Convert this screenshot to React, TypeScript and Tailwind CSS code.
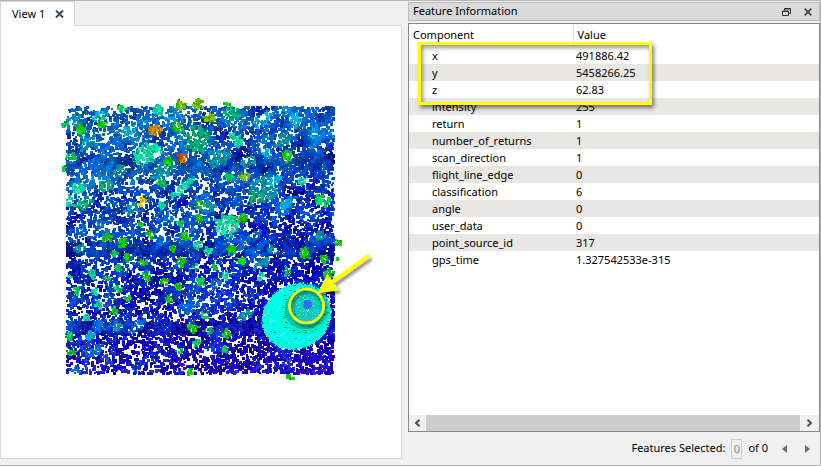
import { useMemo } from 'react';

type RGB = [number, number, number];

interface IFeatureRow {
  component: string;
  value: string;
}

const rows: IFeatureRow[] = [
  { component: 'x', value: '491886.42' },
  { component: 'y', value: '5458266.25' },
  { component: 'z', value: '62.83' },
  { component: 'intensity', value: '255' },
  { component: 'return', value: '1' },
  { component: 'number_of_returns', value: '1' },
  { component: 'scan_direction', value: '1' },
  { component: 'flight_line_edge', value: '0' },
  { component: 'classification', value: '6' },
  { component: 'angle', value: '0' },
  { component: 'user_data', value: '0' },
  { component: 'point_source_id', value: '317' },
  { component: 'gps_time', value: '1.327542533e-315' },
];

// Height classes of the objects that stand above the ground
const colors: Record<string, RGB> = {
  green: [15, 210, 10],
  lime: [110, 195, 0],
  sea: [0, 170, 120],
  aqua: [0, 225, 165],
  mint: [0, 205, 90],
  cyan: [0, 175, 225],
  teal: [0, 145, 175],
  sky: [0, 105, 225],
  navy: [0, 15, 190],
  gold: [210, 145, 0],
  yellow: [240, 205, 0],
  red: [205, 70, 0],
};

// [color, x, y, rx, ry, rotation in degrees]
type Shape = [string, number, number, number, number?, number?];

const roofs: Shape[] = [
  ['teal', 88, 142, 11, 6, -35], ['cyan', 100, 115, 9, 6, -35], ['cyan', 128, 130, 12, 5, -35],
  ['sky', 110, 148, 14, 8, -35], ['sky', 90, 168, 16, 8, -25], ['aqua', 147, 154, 16, 10, -35],
  ['sea', 197, 139, 13, 15, 0], ['teal', 120, 170, 10, 6, -35], ['teal', 163, 170, 14, 9, -40],
  ['aqua', 182, 187, 15, 5, -42], ['sea', 105, 186, 9, 6, -20], ['aqua', 77, 187, 8, 6],
  ['aqua', 69, 201, 6], ['sea', 85, 203, 10, 6, -40], ['teal', 132, 208, 10, 6, -35],
  ['navy', 183, 202, 7, 5, -30], ['sea', 232, 113, 8, 7], ['cyan', 263, 119, 13, 6, -40],
  ['cyan', 295, 120, 7], ['cyan', 312, 135, 4], ['teal', 283, 140, 11, 6, -40],
  ['aqua', 235, 139, 9, 5, 40], ['teal', 217, 158, 14, 10, -10], ['teal', 247, 162, 10, 6, -25],
  ['cyan', 267, 153, 5], ['teal', 262, 190, 19, 12, -42], ['sea', 255, 198, 8, 6, -40],
  ['cyan', 274, 180, 7, 5, -40], ['aqua', 302, 180, 5], ['mint', 322, 200, 8, 7],
  ['sky', 285, 205, 14, 8, -45], ['cyan', 286, 204, 8, 5, -45], ['aqua', 226, 225, 12, 12],
  ['sky', 255, 235, 9, 5, -35], ['teal', 320, 235, 5], ['teal', 210, 207, 6],
  ['teal', 80, 248, 8, 5, -25], ['sky', 240, 247, 14, 5, -40], ['teal', 262, 263, 11, 4, -35],
  ['teal', 273, 250, 7, 4, 30], ['teal', 245, 315, 10, 6, -35], ['sky', 188, 305, 13, 8, -35],
  ['sky', 95, 350, 10, 5, -35], ['sky', 215, 283, 6, 4], ['cyan', 90, 335, 5],
  ['sky', 98, 327, 6], ['sky', 136, 327, 12, 5, -35], ['teal', 117, 326, 5],
  ['teal', 130, 375, 3, 1], ['sky', 75, 370, 5],
];

const trees: Shape[] = [
  ['mint', 65, 124, 3], ['green', 80, 129, 6], ['green', 102, 123, 5], ['mint', 122, 107, 5, 4],
  ['gold', 155, 130, 7], ['aqua', 158, 110, 6, 5], ['green', 177, 127, 6], ['lime', 180, 105, 5],
  ['lime', 198, 104, 6, 5], ['red', 164, 98, 1], ['mint', 71, 157, 6], ['mint', 64, 168, 3],
  ['red', 182, 158, 6], ['gold', 182, 161, 3], ['green', 168, 160, 5], ['mint', 162, 183, 5],
  ['yellow', 142, 201, 5], ['aqua', 161, 205, 4], ['green', 200, 204, 5], ['green', 199, 218, 4],
  ['green', 141, 224, 4], ['green', 150, 234, 5], ['mint', 181, 223, 4], ['green', 184, 237, 5],
  ['green', 107, 237, 5], ['lime', 209, 117, 6], ['green', 226, 104, 3, 2], ['green', 287, 156, 7],
  ['lime', 245, 177, 6, 5], ['mint', 228, 177, 5], ['green', 242, 218, 6], ['green', 123, 243, 5],
  ['aqua', 197, 245, 5], ['green', 172, 248, 4], ['mint', 113, 253, 4], ['green', 127, 257, 4],
  ['mint', 118, 267, 4], ['green', 143, 262, 4], ['green', 147, 276, 5], ['green', 181, 262, 5],
  ['mint', 196, 266, 4], ['mint', 200, 282, 5], ['green', 164, 281, 4], ['green', 178, 286, 4],
  ['green', 168, 298, 4], ['aqua', 92, 274, 5], ['mint', 107, 278, 4], ['mint', 118, 288, 4],
  ['aqua', 95, 290, 4], ['mint', 77, 290, 4], ['aqua', 70, 277, 3], ['mint', 127, 297, 4],
  ['green', 114, 310, 4], ['aqua', 99, 305, 4], ['aqua', 87, 318, 4], ['mint', 69, 336, 5, 4],
  ['green', 72, 352, 5], ['green', 192, 328, 6], ['mint', 196, 343, 4], ['mint', 180, 350, 4],
  ['green', 190, 371, 5, 4], ['aqua', 208, 251, 5], ['green', 231, 249, 5], ['green', 241, 260, 5],
  ['green', 305, 253, 6], ['green', 323, 258, 5], ['green', 337, 243, 4], ['green', 337, 258, 2],
  ['green', 328, 273, 5], ['sea', 287, 271, 5], ['mint', 215, 266, 4], ['aqua', 225, 275, 4],
  ['aqua', 260, 277, 4], ['mint', 204, 315, 4], ['sea', 208, 330, 5], ['green', 227, 333, 5],
  ['mint', 225, 350, 4], ['green', 290, 376, 4, 3],
];

// Places where no ground point was returned
const gaps: [number, number, number][] = [
  [99, 248, 4], [128, 352, 4], [177, 315, 3], [155, 297, 4], [197, 338, 3], [192, 362, 4],
  [232, 211, 5], [263, 118, 4], [75, 308, 3], [75, 363, 3], [197, 278, 3], [67, 178, 4],
  [143, 306, 3], [190, 282, 3], [180, 216, 3], [132, 208, 3],
];

const CLOUD = { left: 55, top: 90, width: 320, height: 300 };
const GROUND = { left: 66, top: 106, right: 334, bottom: 374 };

function createRandom(seed: number) {
  let a = seed;
  return () => {
    a = (a + 0x6d2b79f5) | 0;
    let t = Math.imul(a ^ (a >>> 15), 1 | a);
    t = (t + Math.imul(t ^ (t >>> 7), 61 | t)) ^ t;
    return ((t ^ (t >>> 14)) >>> 0) / 4294967296;
  };
}

function hash(x: number, y: number) {
  const n = Math.sin(x * 127.1 + y * 311.7) * 43758.5453;
  return n - Math.floor(n);
}

function noise(x: number, y: number) {
  const ix = Math.floor(x);
  const iy = Math.floor(y);
  const fx = x - ix;
  const fy = y - iy;
  const top = hash(ix, iy) * (1 - fx) + hash(ix + 1, iy) * fx;
  const bottom = hash(ix, iy + 1) * (1 - fx) + hash(ix + 1, iy + 1) * fx;
  return top * (1 - fy) + bottom * fy;
}

function ellipse(x: number, y: number, cx: number, cy: number, rx: number, ry: number, deg: number) {
  const a = (deg * Math.PI) / 180;
  const dx = x - cx;
  const dy = y - cy;
  const u = (dx * Math.cos(a) + dy * Math.sin(a)) / rx;
  const v = (-dx * Math.sin(a) + dy * Math.cos(a)) / ry;
  return u * u + v * v;
}

function findShape(shapes: Shape[], x: number, y: number, edge: number) {
  let hit: Shape | undefined;
  for (const shape of shapes) {
    const [, cx, cy, rx, ry = rx, deg = 0] = shape;
    if (ellipse(x, y, cx, cy, rx, ry, deg) < edge) hit = shape;
  }
  return hit;
}

function isRoad(x: number, y: number) {
  const near = (cy: number, half: number) => Math.abs(y - cy) < half;
  const diagonal = Math.abs(x + y - 440) < 5 && y < 165;
  return near(165 - (x - 66) * 0.02, 8) || near(248, 7) || near(327, 7) || diagonal;
}

function shade(color: RGB, k: number): string {
  return color
    .map((c) => Math.max(0, Math.min(255, Math.round((c * k) / 15) * 15)))
    .join(',');
}

// Scatters the returns over the tile, then merges the pixels into runs, one path for each color
function buildCloud() {
  const random = createRandom(317);
  const { left, top, width, height } = CLOUD;
  const buffer: (string | null)[] = new Array(width * height).fill(null);

  const plot = (x: number, y: number, color: string, size: number) => {
    for (let j = 0; j < size; j++) {
      for (let i = 0; i < size; i++) {
        const px = x + i - left;
        const py = y + j - top;
        if (px >= 0 && py >= 0 && px < width && py < height) {
          buffer[py * width + px] = color;
        }
      }
    }
  };

  for (let n = 0; n < 52000; n++) {
    const x = Math.floor(60 + random() * 284);
    const y = Math.floor(95 + random() * 286);
    const inside = x >= GROUND.left && x < GROUND.right - 1 && y >= GROUND.top && y < GROUND.bottom - 1;
    const jitter = random();
    const keep = random();
    const edge = 0.6 + random() * 0.6;

    if (ellipse(x, y, 295, 316, 36, 31, -30) < 1) continue;

    const tree = findShape(trees, x + 1, y + 1, edge);
    if (tree) {
      if (keep < 0.5) plot(x, y, shade(colors[tree[0]], 0.68 + jitter * 0.42), jitter > 0.4 ? 3 : 2);
      continue;
    }
    if (!inside) continue;
    if (gaps.some(([gx, gy, r]) => Math.hypot(x + 1 - gx, (y + 1 - gy) * 1.3) < r)) continue;

    const roof = findShape(roofs, x + 1, y + 1, edge);
    if (roof) {
      if (keep < 0.38) plot(x, y, shade(colors[roof[0]], 0.72 + jitter * 0.4), jitter > 0.4 ? 3 : 2);
      continue;
    }

    const t = (y - GROUND.top) / 268;
    const u = (x - GROUND.left) / 268;
    const streak = noise((x - y) / 18 + 40, (x + y) / 8);
    const patch = noise(x / 12 + 5, y / 12);
    const road = isRoad(x, y);
    const density = road ? 0.75 : 0.11 + 0.3 * noise((x - y) / 6 + 90, (x + y) / 4) + u * 0.11;
    if (keep > density) continue;

    const g = 112 - t * 88 - u * 32 + (streak - 0.5) * 60 + (patch - 0.5) * 100 * (1 - t * 0.35);
    const b = 192 + (jitter - 0.5) * 75 + (patch - 0.5) * 60;
    const r = t > 0.6 ? (t - 0.6) * 90 * (jitter + u * 0.5) : 0;
    const k = road ? 0.72 + streak * 0.36 : 1;
    plot(x, y, shade([r, Math.max(2, g + (jitter - 0.5) * 50), b], k), random() > 0.3 ? 3 : 2);
  }

  // Tall building in the lower right corner
  for (let y = 278; y < 354; y++) {
    for (let x = 256; x < 338; x++) {
      const d = ellipse(x, y, 296, 316, 36, 32, -35) + (random() - 0.5) * 0.1;
      if (d > 1) continue;
      const rim = Math.hypot(x - 304, y - 309);
      let color: RGB = [0, 255, 230];
      if (rim < 26 && x + y > 590) color = [0, 240, 205];
      if (rim < 20) color = [0, 200, 170];
      if (rim < 15) color = [20, 205, 190];
      const k = 0.95 + random() * 0.1;
      if (random() < 0.02 && rim > 24 && x < 300) {
        plot(x, y, '255,255,255', 1);
        continue;
      }
      plot(x, y, shade(color, k), 1);
      if (random() < (rim > 17 && rim < 24 ? 0.035 : d > 0.9 ? 0.05 : 0.004)) {
        plot(x - 1, y, '0,135,90', 2);
      }
      if (rim < 16 && random() < 0.04) plot(x, y, '165,210,215', 1);
    }
  }
  for (let y = 298; y < 311; y++) {
    for (let x = 300; x < 314; x++) {
      if (Math.hypot(x - 307, y - 304) < 4 + random()) plot(x, y, '45,110,250', 1);
    }
  }

  const paths = new Map<string, string[]>();
  for (let y = 0; y < height; y++) {
    let x = 0;
    while (x < width) {
      const color = buffer[y * width + x];
      let end = x + 1;
      while (end < width && buffer[y * width + end] === color) end++;
      if (color) {
        if (!paths.has(color)) paths.set(color, []);
        paths.get(color)!.push(`M${x} ${y}h${end - x}v1h${x - end}z`);
      }
      x = end;
    }
  }
  return [...paths].map(([color, runs]) => ({ color, d: runs.join('') }));
}

function PointCloud() {
  const paths = useMemo(buildCloud, []);
  return (
    <svg
      width="320"
      height="300"
      viewBox="0 0 320 300"
      role="img"
      aria-label="Point cloud"
      className="mt-16 ml-[54px] shrink-0"
    >
      <defs>
        <filter id="mark-shadow" x="-20%" y="-20%" width="150%" height="150%">
          <feDropShadow dx="2" dy="3" stdDeviation="1.5" floodColor="#000" floodOpacity="0.45" />
        </filter>
      </defs>
      <g shapeRendering="crispEdges">
        {paths.map((path) => (
          <path key={path.color} d={path.d} fill={`rgb(${path.color})`} />
        ))}
      </g>
      <g filter="url(#mark-shadow)">
        <circle cx="251.5" cy="216" r="17" fill="none" stroke="#ffff00" strokeWidth="2.6" />
        <path d="M313 166.500L278 191.500" stroke="#ffff00" strokeWidth="4" strokeLinecap="round" />
        <path d="M262.500 203.500L272.500 183.500L284 200z" fill="#ffff00" />
      </g>
    </svg>
  );
}

function ViewPane() {
  return (
    <section className="flex min-w-0 flex-col">
      <div className="flex h-6">
        <div className="relative z-10 -mb-px flex w-[75px] items-center justify-between border-x border-t border-[#d9d9d9] bg-white pr-[10px] pl-[11px]">
          <span>View 1</span>
          <button type="button" aria-label="Close view">
            <svg width="9" height="8" viewBox="0 0 9 8" className="block">
              <path d="M1 .5L8 7.500M8 .5L1 7.500" stroke="#34495e" strokeWidth="2" />
            </svg>
          </button>
        </div>
      </div>
      <div className="flex flex-1 overflow-hidden border border-[#d9d9d9] bg-white">
        <PointCloud />
      </div>
    </section>
  );
}

function ScrollBar() {
  return (
    <div className="mt-auto flex h-4 bg-[#f0f0f0]">
      <button type="button" aria-label="Scroll left" className="flex w-[17px] items-center justify-center">
        <svg width="7" height="8" viewBox="0 0 7 8">
          <path d="M5.500 .7L2 4L5.500 7.300" fill="none" stroke="#505050" strokeWidth="2" />
        </svg>
      </button>
      <div className="flex-1 bg-[#cdcdcd]" />
      <button type="button" aria-label="Scroll right" className="flex w-[19px] items-center justify-center">
        <svg width="7" height="8" viewBox="0 0 7 8">
          <path d="M1.500 .7L5 4L1.500 7.300" fill="none" stroke="#505050" strokeWidth="2" />
        </svg>
      </button>
    </div>
  );
}

function FeatureTable() {
  return (
    <div className="relative flex flex-1 flex-col border border-[#828790] bg-white">
      <table className="w-full table-fixed border-collapse text-left">
        <thead>
          <tr className="h-[23px]">
            <th className="w-[164px] border-r border-[#e5e5e5] p-0 pl-1 font-normal">Component</th>
            <th className="p-0 pl-1 font-normal">Value</th>
          </tr>
        </thead>
        <tbody>
          {rows.map((row) => (
            <tr key={row.component} className="h-[17px] leading-[17px] even:bg-[#e9e7e3]">
              <td className="p-0 pl-[23px]">{row.component}</td>
              <td className="p-0 pl-[3px]">{row.value}</td>
            </tr>
          ))}
        </tbody>
      </table>
      {/* Highlight over the coordinates */}
      <div className="pointer-events-none absolute top-[18px] left-[9px] h-[63px] w-[234px] border-3 border-[#ffff00] shadow-[2px_3px_4px_rgba(0,0,0,0.5),inset_2px_3px_4px_rgba(0,0,0,0.4)]" />
      <ScrollBar />
    </div>
  );
}

function FeatureInformation() {
  return (
    <section className="flex min-w-0 flex-col pt-px">
      <header className="flex h-[19px] items-center border border-[#b9b9b9] bg-[#dadada] pr-[7px] pl-1">
        <h2 className="flex-1">Feature Information</h2>
        <button type="button" aria-label="Float" className="mr-[13px]">
          <svg width="9" height="8" viewBox="0 0 9 8" className="block">
            <path d="M2.500 2.500V.5H8.500V5.500H6.500M2 1H9" fill="none" stroke="#333" />
            <path d="M.5 3H6.500V7.500H.5zM0 3.500H7" fill="none" stroke="#333" />
          </svg>
        </button>
        <button type="button" aria-label="Close">
          <svg width="8" height="8" viewBox="0 0 8 8" className="block">
            <path d="M.7 .7L7.300 7.300M7.300 .7L.7 7.300" stroke="#444" strokeWidth="1.800" />
          </svg>
        </button>
      </header>
      <div className="mt-[2px] flex flex-1 flex-col">
        <FeatureTable />
      </div>
      <footer className="flex h-[33px] items-center justify-end pr-[10px]">
        <label htmlFor="feature-index">Features Selected:</label>
        <input
          id="feature-index"
          type="text"
          disabled
          defaultValue="0"
          className="mx-[6px] h-5 w-[11px] border border-[#cccccc] text-center text-[#888888]"
        />
        <span>of 0</span>
        <button type="button" aria-label="Previous feature" className="ml-[14px]">
          <svg width="5" height="8" viewBox="0 0 5 8" className="block">
            <path d="M5 0V8L0 4z" fill="#6d6d6d" />
          </svg>
        </button>
        <button type="button" aria-label="Next feature" className="ml-[18px]">
          <svg width="5" height="8" viewBox="0 0 5 8" className="block">
            <path d="M0 0V8L5 4z" fill="#6d6d6d" />
          </svg>
        </button>
      </footer>
    </section>
  );
}

export default function App() {
  return (
    <main className="grid min-h-screen grid-cols-[402fr_412fr] gap-x-[6px] border-t border-r border-b border-[#b4b4b4] bg-[#f0f0f0] font-['Noto_Sans','Open_Sans',sans-serif] text-[11px] text-black">
      <div className="grid min-w-0 pb-[6px]">
        <ViewPane />
      </div>
      <FeatureInformation />
    </main>
  );
}
